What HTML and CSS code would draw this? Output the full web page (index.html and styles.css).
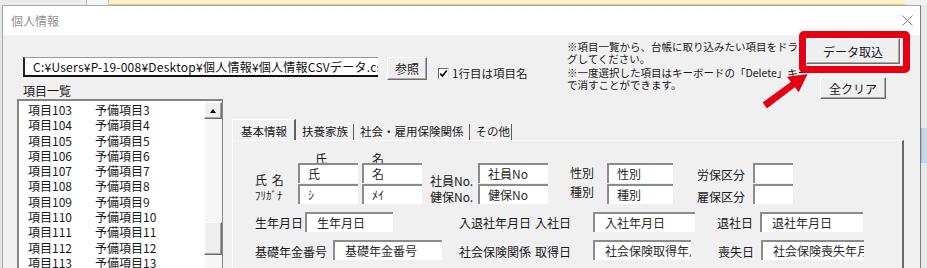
FILE: index.html
```html
<!DOCTYPE html>
<html lang="ja">
<head>
    <meta charset="UTF-8">
    <meta name="viewport" content="width=device-width, initial-scale=1.0">
    <title>個人情報</title>
    <link rel="stylesheet" href="styles.css">
</head>
<body>
    <div class="topstrip">
        <div class="strip-grey"></div>
        <div class="strip-light"></div>
        <div class="strip-yellow"></div>
        <div class="strip-end"></div>
    </div>
    <div class="desk">
        <div class="edge-left"></div>
        <div class="dialog">
            <div class="titlebar">
                <span class="title">個人情報</span>
                <svg class="close" width="11" height="11" viewBox="0 0 11 11">
                    <path d="M0.5 0.5 L10.5 10.5 M10.5 0.5 L0.5 10.5" stroke="#7d7d7d" stroke-width="1" fill="none"/>
                </svg>
            </div>
            <div class="dlg-body">
                <div class="top-area">
                    <div class="file-col">
                        <div class="file-row">
                            <div class="path-box">C:¥Users¥P-19-008¥Desktop¥個人情報¥個人情報CSVデータ.csv</div>
                            <button class="btn btn-ref">参照</button>
                            <label class="check">
                                <span class="checkbox">
                                    <svg width="9" height="9" viewBox="0 0 9 9">
                                        <path d="M1.2 4.6 L3.4 7 L7.8 1.6" stroke="#000" stroke-width="1.6" fill="none"/>
                                    </svg>
                                </span>
                                1行目は項目名
                            </label>
                        </div>
                        <div class="list-caption">項目一覧</div>
                    </div>
                    <div class="notes">
                        <p>※項目一覧から、台帳に取り込みたい項目をドラッ<br>グしてください。</p>
                        <p>※一度選択した項目はキーボードの「Delete」キー<br>で消すことができます。</p>
                    </div>
                    <div class="actions">
                        <button class="btn btn-import">データ取込</button>
                        <button class="btn btn-clear">全クリア</button>
                        <div class="highlight"></div>
                        <svg class="arrow" width="52" height="42" viewBox="0 0 52 42">
                            <polygon points="3,32.6 31.2,12 27.6,7 47,4.5 38.6,21.8 35,16.8 7,38" fill="#e60012" stroke="#b8000e" stroke-width="0.6"/>
                        </svg>
                    </div>
                </div>
                <div class="main-area">
                    <div class="listbox">
                        <div class="list-items">
                            <div class="list-row"><span>項目103</span><span>予備項目3</span></div>
                            <div class="list-row"><span>項目104</span><span>予備項目4</span></div>
                            <div class="list-row"><span>項目105</span><span>予備項目5</span></div>
                            <div class="list-row"><span>項目106</span><span>予備項目6</span></div>
                            <div class="list-row"><span>項目107</span><span>予備項目7</span></div>
                            <div class="list-row"><span>項目108</span><span>予備項目8</span></div>
                            <div class="list-row"><span>項目109</span><span>予備項目9</span></div>
                            <div class="list-row"><span>項目110</span><span>予備項目10</span></div>
                            <div class="list-row"><span>項目111</span><span>予備項目11</span></div>
                            <div class="list-row"><span>項目112</span><span>予備項目12</span></div>
                            <div class="list-row"><span>項目113</span><span>予備項目13</span></div>
                            <div class="list-row"><span>項目114</span><span>予備項目14</span></div>
                        </div>
                        <div class="scrollbar">
                            <div class="scroll-up"><span class="tri"></span></div>
                            <div class="scroll-thumb"></div>
                        </div>
                    </div>
                    <div class="tabs">
                        <div class="tab-strip">
                            <div class="tab active">基本情報</div>
                            <div class="tab">扶養家族</div>
                            <div class="tab">社会・雇用保険関係</div>
                            <div class="tab last">その他</div>
                        </div>
                        <div class="panel">
                            <div class="name-grid">
                                <div class="head head-sei">氏</div>
                                <div class="head head-mei">名</div>

                                <div class="lbl r2 c1 off-10 spaced">氏 名</div>
                                <div class="fld r2 c2">氏</div>
                                <div class="fld r2 c3">名</div>
                                <div class="lbl r2 c4 off-11 pad8">社員No.</div>
                                <div class="fld r2 c5">社員No</div>
                                <div class="lbl r2 c6 off-3 pad22">性別</div>
                                <div class="fld r2 c7">性別</div>
                                <div class="lbl r2 c8 off-5 pad24">労保区分</div>
                                <div class="fld r2 c9"></div>

                                <div class="lbl r3 c1 off-4 kana">ﾌﾘｶﾞﾅ</div>
                                <div class="fld r3 c2">ｼ</div>
                                <div class="fld r3 c3">ﾒｲ</div>
                                <div class="lbl r3 c4 off-6 pad8">健保No.</div>
                                <div class="fld r3 c5">健保No</div>
                                <div class="lbl r3 c6 off-1 pad22">種別</div>
                                <div class="fld r3 c7">種別</div>
                                <div class="lbl r3 c8 off-6 pad24">雇保区分</div>
                                <div class="fld r3 c9"></div>
                            </div>

                            <div class="form-row row-date">
                                <div class="lbl w50">生年月日</div>
                                <div class="fld w88">生年月日</div>
                                <div class="lbl w76 ml66">入退社年月日</div>
                                <div class="lbl w58">入社日</div>
                                <div class="fld w102">入社年月日</div>
                                <div class="lbl w43 ml22">退社日</div>
                                <div class="fld w103">退社年月日</div>
                            </div>

                            <div class="form-row row-ins">
                                <div class="lbl w78">基礎年金番号</div>
                                <div class="fld w109">基礎年金番号</div>
                                <div class="lbl w76 ml17">社会保険関係</div>
                                <div class="lbl w58">取得日</div>
                                <div class="fld w98">社会保険取得年月日</div>
                                <div class="lbl w43 ml27">喪失日</div>
                                <div class="fld w103">社会保険喪失年月日</div>
                            </div>
                        </div>
                    </div>
                </div>
            </div>
        </div>
        <div class="edge-right"><div class="edge-tab"></div></div>
    </div>
</body>
</html>
```

FILE: styles.css
```css
body {
    margin: 0;
    width: 927px;
    height: 268px;
    overflow: hidden;
    background-color: #ececec;
    font-family: "Noto Sans CJK JP", "Noto Sans", sans-serif;
    font-size: 12px;
    color: #1a1a1a;
}
.topstrip {
    display: flex;
    height: 5px;
}
.strip-grey {
    width: 86px;
    background-color: #ebebeb;
    border-right: 1px solid #b9b9b9;
}
.strip-light {
    width: 21px;
    background-color: #f5f5f5;
    border-right: 1px solid #c8c8c8;
}
.strip-yellow {
    width: 797px;
    background-color: #fbf3c4;
    border-bottom: 1px solid #d8cf9c;
    box-sizing: border-box;
}
.strip-end {
    flex: 1;
    background-color: #f2f2f2;
}
.desk {
    display: flex;
    height: 263px;
}
.edge-left {
    width: 2px;
    background-color: #e6e6e6;
}
.edge-right {
    flex: 1;
    background-color: #eaeaea;
}
.edge-tab {
    margin-top: 123px;
    height: 35px;
    background-color: #c9d5e6;
    border-left: 1px solid #a6b7cf;
}
.dialog {
    width: 919px;
    box-sizing: border-box;
    border: 1px solid #a9a9a9;
    border-bottom: none;
    border-right-color: #7d7d7d;
    display: flex;
    flex-direction: column;
}
.titlebar {
    height: 29px;
    background-color: #fff;
    display: flex;
    align-items: center;
    justify-content: space-between;
    padding: 0 7px 0 8px;
}
.title {
    color: #929292;
    font-size: 12px;
    line-height: 29px;
}
.close {
    display: block;
}
.dlg-body {
    flex: 1;
    background-color: #f0f0f0;
}
.top-area {
    display: flex;
    height: 64px;
    position: relative;
}
.file-col {
    width: 564px;
    box-sizing: border-box;
    padding-left: 20px;
    padding-top: 22px;
}
.file-row {
    display: flex;
    align-items: flex-start;
    height: 23px;
}
.path-box {
    width: 355px;
    height: 20px;
    box-sizing: border-box;
    background-color: #fff;
    border-top: 1px solid #9a9a9a;
    border-left: 2px solid #262626;
    border-bottom: 2px solid #111;
    padding-left: 8px;
    line-height: 17px;
    letter-spacing: 0.25px;
    white-space: nowrap;
    overflow: hidden;
    color: #111;
}
.btn {
    font-family: inherit;
    font-size: 12px;
    color: #1a1a1a;
    background-color: #efefef;
    border: 1px solid;
    border-color: #fff #6d6d6d #6d6d6d #fff;
    box-shadow: inset -1px -1px 0 #a8a8a8;
    padding: 0;
    box-sizing: border-box;
}
.btn-ref {
    margin-left: 9px;
    width: 40px;
    height: 23px;
}
.check {
    margin-left: 11px;
    margin-top: 10px;
    display: flex;
    align-items: center;
    font-size: 11.5px;
    line-height: 12px;
    white-space: nowrap;
}
.checkbox {
    width: 11px;
    height: 11px;
    box-sizing: border-box;
    background-color: #fff;
    border-top: 1px solid #6d6d6d;
    border-left: 1px solid #6d6d6d;
    border-right: 1px solid #e3e3e3;
    border-bottom: 1px solid #e3e3e3;
    margin-right: 3px;
    display: flex;
    align-items: center;
    justify-content: center;
}
.checkbox svg {
    display: block;
}
.list-caption {
    margin-top: 4px;
    line-height: 14px;
}
.notes {
    width: 239px;
    padding-top: 6px;
    overflow: hidden;
    white-space: nowrap;
    font-size: 10.5px;
    line-height: 12px;
}
.notes p {
    margin: 0 0 2px 0;
}
.actions {
    width: 94px;
    padding-top: 3px;
    display: flex;
    flex-direction: column;
    align-items: center;
    position: relative;
}
.btn-import {
    width: 94px;
    height: 27px;
}
.btn-clear {
    width: 66px;
    height: 22px;
    margin-top: 13px;
}
.highlight {
    position: absolute;
    left: -7px;
    top: -4px;
    width: 111px;
    height: 42px;
    box-sizing: border-box;
    border: 7px solid #e60012;
    border-radius: 5px;
}
.arrow {
    position: absolute;
    left: -46px;
    top: 35px;
}
.main-area {
    display: flex;
    padding-left: 14px;
}
.listbox {
    width: 206px;
    height: 175px;
    box-sizing: border-box;
    background-color: #fff;
    border-top: 2px solid #858585;
    border-left: 2px solid #858585;
    display: flex;
}
.list-items {
    flex: 1;
    padding-top: 1px;
    padding-left: 9px;
}
.list-row {
    display: grid;
    grid-template-columns: 67px auto;
    height: 15.3px;
    line-height: 15.3px;
    white-space: nowrap;
}
.scrollbar {
    width: 18px;
    background-color: #f6f6f6;
    border-right: 1px solid #8a8a8a;
}
.scroll-up, .scroll-thumb {
    box-sizing: border-box;
    background-color: #efefef;
    border: 1px solid;
    border-color: #fff #6d6d6d #6d6d6d #fff;
    box-shadow: inset -1px -1px 0 #a8a8a8;
}
.scroll-up {
    margin-top: 1px;
    height: 17px;
    display: flex;
    align-items: center;
    justify-content: center;
}
.tri {
    width: 0;
    height: 0;
    border-left: 3.5px solid transparent;
    border-right: 3.5px solid transparent;
    border-bottom: 4px solid #000;
}
.scroll-thumb {
    margin-top: 103px;
    height: 33px;
}
.tabs {
    margin-left: 9px;
    margin-top: 19px;
    width: 672px;
}
.tab-strip {
    display: flex;
    align-items: flex-end;
    height: 22px;
}
.tab {
    font-size: 11.5px;
    height: 16px;
    line-height: 14px;
    padding: 0 5px 0 6px;
    border-right: 1px solid #5e5e5e;
    white-space: nowrap;
}
.tab.active {
    height: 21px;
    line-height: 22px;
    padding: 0 7px 0 8px;
    border-left: 1px solid #fff;
    border-top: 1px solid #fff;
    border-right: 2px solid #5e5e5e;
    box-sizing: border-box;
}
.tab.last {
    padding-right: 1px;
}
.panel {
    height: 140px;
    box-sizing: border-box;
    border-top: 1px solid #fafafa;
    border-left: 1px solid #fff;
    border-right: 2px solid #6a6a6a;
    padding: 11px 0 0 22px;
}
.name-grid {
    display: grid;
    grid-template-columns: 43px 60px 64px 56px 70px 59px 66px 80px 40px;
    grid-template-rows: 11px 21px 20px;
}
.head {
    grid-row: 1;
    line-height: 14px;
    align-self: start;
}
.head-sei {
    grid-column: 2;
    padding-left: 17px;
}
.head-mei {
    grid-column: 3;
    padding-left: 14px;
}
.lbl {
    line-height: 14px;
    white-space: nowrap;
}
.name-grid .lbl {
    align-self: start;
}
.fld {
    height: 20px;
    box-sizing: border-box;
    background-color: #fff;
    border-top: 2px solid #8c8c8c;
    border-left: 2px solid #8c8c8c;
    padding-left: 8px;
    line-height: 17px;
    white-space: nowrap;
    overflow: hidden;
    color: #2a2a2a;
}
.r2 { grid-row: 2; }
.r3 { grid-row: 3; }
.c1 { grid-column: 1; }
.c2 { grid-column: 2; }
.c3 { grid-column: 3; margin-left: 4px; }
.c4 { grid-column: 4; }
.c5 { grid-column: 5; }
.c6 { grid-column: 6; }
.c7 { grid-column: 7; }
.c8 { grid-column: 8; }
.c9 { grid-column: 9; }
.pad8 { padding-left: 8px; }
.pad22 { padding-left: 22px; }
.pad24 { padding-left: 24px; }
.off-1 { padding-top: 1px; }
.off-3 { padding-top: 3px; }
.off-4 { padding-top: 4px; }
.off-5 { padding-top: 5px; }
.off-6 { padding-top: 6px; }
.off-10 { padding-top: 10px; }
.off-11 { padding-top: 11px; }
.spaced {
    word-spacing: 2px;
}
.kana {
    font-size: 11px;
}
.form-row {
    display: flex;
    align-items: center;
    height: 20px;
    margin-top: 8px;
}
.form-row .fld {
    padding-left: 10px;
}
.row-date .lbl {
    padding-top: 1px;
}
.row-ins .lbl {
    padding-top: 4px;
}
.w43 { width: 43px; }
.w50 { width: 50px; }
.w58 { width: 58px; }
.w76 { width: 76px; }
.w78 { width: 78px; }
.w88 { width: 88px; }
.w98 { width: 98px; }
.w102 { width: 102px; }
.w103 { width: 103px; }
.w109 { width: 109px; }
.ml17 { margin-left: 17px; }
.ml22 { margin-left: 22px; }
.ml27 { margin-left: 27px; }
.ml66 { margin-left: 66px; }
.lbl.w43, .lbl.w50, .lbl.w58, .lbl.w76, .lbl.w78 {
    flex: none;
}
.fld.w88, .fld.w98, .fld.w102, .fld.w103, .fld.w109 {
    flex: none;
}
```
